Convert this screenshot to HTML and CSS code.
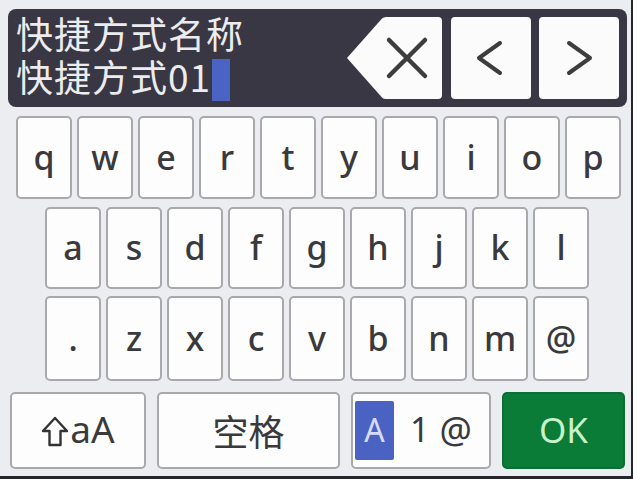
FILE: index.html
```html
<!DOCTYPE html>
<html lang="zh">
<head>
<meta charset="utf-8">
<link rel="stylesheet" href="styles.css">
</head>
<body>
<div class="screen">
  <div class="header">
    <div class="title">
      <div class="line">快捷方式名称</div>
      <div class="line">快捷方式01<span class="cursor"></span></div>
    </div>
    <svg class="del" width="95" height="82" viewBox="0 0 95 82">
      <path d="M0 41 L35 1.5 Q36.5 0 39 0 H91 Q95 0 95 4 V78 Q95 82 91 82 H39 Q36.5 82 35 80.5 Z" fill="#fbfbfc"/>
      <path d="M42 23 L78 59 M78 23 L42 59" stroke="#3d3d3d" stroke-width="4.5" stroke-linecap="round"/>
    </svg>
    <div class="nav">
      <svg width="80" height="82" viewBox="0 0 80 82"><path d="M49 26 L28 41 L49 56" fill="none" stroke="#3d3d3d" stroke-width="4" stroke-linecap="round" stroke-linejoin="round"/></svg>
    </div>
    <div class="nav">
      <svg width="80" height="82" viewBox="0 0 80 82"><path d="M30 26 L51 41 L30 56" fill="none" stroke="#3d3d3d" stroke-width="4" stroke-linecap="round" stroke-linejoin="round"/></svg>
    </div>
  </div>

  <div class="keyboard">
    <div class="row row1">
      <div class="key">q</div><div class="key">w</div><div class="key">e</div><div class="key">r</div><div class="key">t</div><div class="key">y</div><div class="key">u</div><div class="key">i</div><div class="key">o</div><div class="key">p</div>
    </div>
    <div class="row row2">
      <div class="key">a</div><div class="key">s</div><div class="key">d</div><div class="key">f</div><div class="key">g</div><div class="key">h</div><div class="key">j</div><div class="key">k</div><div class="key">l</div>
    </div>
    <div class="row row3">
      <div class="key">.</div><div class="key">z</div><div class="key">x</div><div class="key">c</div><div class="key">v</div><div class="key">b</div><div class="key">n</div><div class="key">m</div><div class="key">@</div>
    </div>
    <div class="row row4">
      <div class="key shift">
        <svg width="28" height="31" viewBox="0 0 28 31"><path d="M14 2 L26 15 H19.5 V29 H8.5 V15 H2 Z" fill="none" stroke="#333" stroke-width="2.4" stroke-linejoin="round"/></svg><span>aA</span>
      </div>
      <div class="key space">空格</div>
      <div class="key mode"><span class="abc">A</span><span class="one">1</span><span class="at">@</span></div>
      <div class="key ok">OK</div>
    </div>
  </div>
</div>
</body>
</html>
```

FILE: styles.css
```css
html, body {
  margin: 0;
  padding: 0;
  background: #ffffff;
}

body {
  width: 637px;
  height: 479px;
  overflow: hidden;
}

.screen {
  width: 633px;
  height: 479px;
  box-sizing: border-box;
  background: #ecedf1;
  border-right: 2px solid #26252b;
  border-bottom: 3px solid #26252b;
  padding-top: 9px;
  display: flex;
  flex-direction: column;
}

.header {
  margin-left: 8px;
  width: 619px;
  height: 98px;
  box-sizing: border-box;
  padding: 8px;
  background: #3a3744;
  border-radius: 8px;
  display: flex;
  align-items: flex-start;
}

.title {
  flex: 1;
  margin-top: -5px;
  font-family: "Noto Sans CJK SC", "Noto Sans", sans-serif;
  font-size: 37px;
  line-height: 43px;
  letter-spacing: 1px;
  color: #ececee;
  white-space: nowrap;
}

.cursor {
  display: inline-block;
  width: 18px;
  height: 42px;
  margin-left: 1px;
  background: #4a64c6;
  vertical-align: -9px;
}

.del {
  display: block;
  margin-right: 9px;
}

.nav {
  width: 80px;
  height: 82px;
  background: #fbfbfc;
  border-radius: 4px;
  margin-right: 8px;
}

.nav:last-child {
  margin-right: 0;
}

.nav svg {
  display: block;
}

.keyboard {
  margin-top: 9px;
  display: flex;
  flex-direction: column;
}

.row {
  display: flex;
  gap: 5px;
}

.row1 {
  padding-left: 16px;
  height: 83px;
}

.row2 {
  padding-left: 45px;
  height: 82px;
  margin-top: 8px;
}

.row3 {
  padding-left: 45px;
  height: 85px;
  margin-top: 7px;
}

.row4 {
  padding-left: 10px;
  height: 77px;
  margin-top: 11px;
  gap: 11px;
}

.key {
  width: 56px;
  height: 100%;
  box-sizing: border-box;
  background: #fdfdfd;
  border: 2px solid #a9a9ad;
  border-radius: 5px;
  display: flex;
  align-items: center;
  justify-content: center;
  font-family: "Noto Sans", sans-serif;
  font-size: 34px;
  font-weight: 500;
  color: #3a3a3c;
  padding-bottom: 2px;
}

.shift {
  width: 136px;
  font-size: 37px;
  font-weight: 400;
  gap: 1px;
  padding-bottom: 4px;
}

.shift svg {
  display: block;
  margin-top: 5px;
}

.space {
  width: 183px;
  font-family: "Noto Sans CJK SC", "Noto Sans", sans-serif;
  font-size: 36px;
  font-weight: 400;
}

.mode {
  width: 140px;
  justify-content: flex-start;
  padding-left: 2px;
  padding-bottom: 0;
  font-weight: 400;
}

.abc {
  width: 39px;
  height: 59px;
  background: #4a62c2;
  border-radius: 2px;
  color: #d6dcfa;
  display: flex;
  align-items: center;
  justify-content: center;
  font-size: 32px;
  padding-bottom: 2px;
  box-sizing: border-box;
}

.one {
  margin-left: 16px;
  font-size: 34px;
  padding-bottom: 3px;
}

.at {
  margin-left: 10px;
  font-size: 36px;
  padding-bottom: 3px;
}

.ok {
  width: 123px;
  background: #0b7b38;
  border-color: #0a6f32;
  color: #c8f2c8;
  font-size: 35px;
  font-weight: 400;
}
```
